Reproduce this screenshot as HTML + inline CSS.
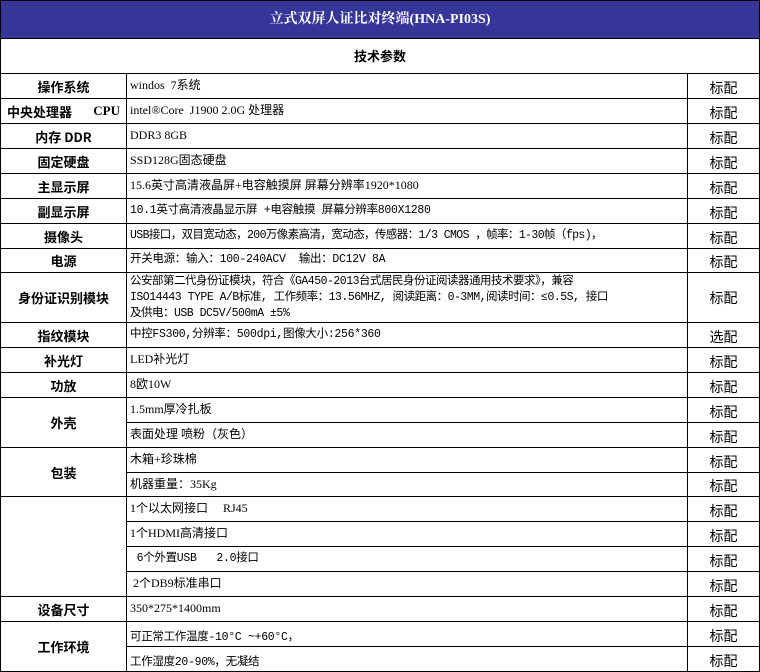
<!DOCTYPE html>
<html><head><meta charset="utf-8"><style>
*{margin:0;padding:0;box-sizing:border-box}
body{width:760px;height:672px;background:#fff;position:relative;overflow:hidden;font-family:"Liberation Serif","Noto Serif CJK SC","Noto Sans CJK SC",serif;color:#000}
.hd{position:absolute;left:0;top:0;width:760px;height:39px;background:#363699;border:1px solid #000;color:#fff;font-weight:bold;font-size:14px;text-align:center;line-height:38px}
.sub{position:absolute;left:0;top:38px;width:760px;height:36px;border:1px solid #000;border-top:none;font-weight:bold;font-size:13px;text-align:center;line-height:36px;font-family:"Noto Sans CJK SC",sans-serif}
.c{position:absolute;border-right:1px solid #000;border-bottom:1px solid #000}
.l{left:0;width:127px;border-left:1px solid #000;font-weight:bold;font-size:13px;font-family:"Noto Sans CJK SC",sans-serif;display:flex;align-items:center;justify-content:center}
.m{left:127px;width:561px;font-size:12px;padding:3px 0 0 3px;line-height:17px;font-family:"Liberation Serif","WenQuanYi Zen Hei",serif;white-space:nowrap;overflow:hidden}
.mo{font-family:"Liberation Mono","WenQuanYi Zen Hei",monospace;font-size:11.5px;letter-spacing:-0.3px}
.r{left:688px;width:72px;font-size:14px;text-align:center;font-family:"WenQuanYi Zen Hei",sans-serif;display:flex;align-items:flex-end;justify-content:center}
</style></head><body>
<div class="hd">立式双屏人证比对终端(HNA-PI03S)</div>
<div class="sub">技术参数</div>

<div class="c l" style="top:74px;height:25px">操作系统</div><div class="c m" style="top:74px;height:25px">windos&nbsp; 7系统</div><div class="c r" style="top:74px;height:25px">标配</div>
<div class="c l" style="top:99px;height:25px;justify-content:space-between;padding:0 6px">中央处理器<span style="font-family:'Liberation Serif',serif">CPU</span></div><div class="c m" style="top:99px;height:25px">intel®Core&nbsp; J1900 2.0G 处理器</div><div class="c r" style="top:99px;height:25px">标配</div>
<div class="c l" style="top:124px;height:25px">内存 DDR</div><div class="c m" style="top:124px;height:25px">DDR3 8GB</div><div class="c r" style="top:124px;height:25px">标配</div>
<div class="c l" style="top:149px;height:25px">固定硬盘</div><div class="c m" style="top:149px;height:25px">SSD128G固态硬盘</div><div class="c r" style="top:149px;height:25px">标配</div>
<div class="c l" style="top:174px;height:25px">主显示屏</div><div class="c m" style="top:174px;height:25px">15.6英寸高清液晶屏+电容触摸屏 屏幕分辨率1920*1080</div><div class="c r" style="top:174px;height:25px">标配</div>
<div class="c l" style="top:199px;height:25px">副显示屏</div><div class="c m mo" style="top:199px;height:25px">10.1英寸高清液晶显示屏 +电容触摸 屏幕分辨率800X1280</div><div class="c r" style="top:199px;height:25px">标配</div>
<div class="c l" style="top:224px;height:25px">摄像头</div><div class="c m mo" style="top:224px;height:25px;letter-spacing:-0.6px">USB接口，双目宽动态，200万像素高清，宽动态，传感器：1/3 CMOS ，帧率：1-30帧（fps)，</div><div class="c r" style="top:224px;height:25px">标配</div>
<div class="c l" style="top:249px;height:24px">电源</div><div class="c m mo" style="top:249px;height:24px;padding-top:2px">开关电源：输入：100-240ACV&nbsp; 输出：DC12V 8A</div><div class="c r" style="top:249px;height:24px">标配</div>
<div class="c l" style="top:273px;height:50px">身份证识别模块</div><div class="c m mo" style="top:273px;height:50px;padding-top:1px;line-height:16px;letter-spacing:-0.5px">公安部第二代身份证模块，符合《GA450-2013台式居民身份证阅读器通用技术要求》，兼容<br>ISO14443 TYPE A/B标准, 工作频率：13.56MHZ, 阅读距离：0-3MM,阅读时间：≤0.5S, 接口<br>及供电：USB DC5V/500mA ±5%</div><div class="c r" style="top:273px;height:50px;align-items:center">标配</div>
<div class="c l" style="top:323px;height:25px">指纹模块</div><div class="c m mo" style="top:323px;height:25px">中控FS300,分辨率：500dpi,图像大小:256*360</div><div class="c r" style="top:323px;height:25px">选配</div>
<div class="c l" style="top:348px;height:25px">补光灯</div><div class="c m" style="top:348px;height:25px">LED补光灯</div><div class="c r" style="top:348px;height:25px">标配</div>
<div class="c l" style="top:373px;height:25px">功放</div><div class="c m" style="top:373px;height:25px">8欧10W</div><div class="c r" style="top:373px;height:25px">标配</div>
<div class="c l" style="top:398px;height:50px">外壳</div><div class="c m" style="top:398px;height:25px">1.5mm厚冷扎板</div><div class="c r" style="top:398px;height:25px">标配</div>
<div class="c m" style="top:423px;height:25px">表面处理 喷粉（灰色）</div><div class="c r" style="top:423px;height:25px">标配</div>
<div class="c l" style="top:448px;height:49px">包装</div><div class="c m" style="top:448px;height:25px">木箱+珍珠棉</div><div class="c r" style="top:448px;height:25px">标配</div>
<div class="c m" style="top:473px;height:24px">机器重量：35Kg</div><div class="c r" style="top:473px;height:24px">标配</div>
<div class="c l" style="top:497px;height:100px"></div>
<div class="c m" style="top:497px;height:25px">1个以太网接口&nbsp;&nbsp;&nbsp;&nbsp; RJ45</div><div class="c r" style="top:497px;height:25px">标配</div>
<div class="c m" style="top:522px;height:25px">1个HDMI高清接口</div><div class="c r" style="top:522px;height:25px">标配</div>
<div class="c m mo" style="top:547px;height:25px">&nbsp;6个外置USB&nbsp;&nbsp; 2.0接口</div><div class="c r" style="top:547px;height:25px">标配</div>
<div class="c m" style="top:572px;height:25px">&nbsp;2个DB9标准串口</div><div class="c r" style="top:572px;height:25px">标配</div>
<div class="c l" style="top:597px;height:25px">设备尺寸</div><div class="c m" style="top:597px;height:25px">350*275*1400mm</div><div class="c r" style="top:597px;height:25px">标配</div>
<div class="c l" style="top:622px;height:50px">工作环境</div><div class="c m mo" style="top:622px;height:25px;padding-top:7px">可正常工作温度-10°C ~+60°C，</div><div class="c r" style="top:622px;height:25px">标配</div>
<div class="c m mo" style="top:647px;height:25px;padding-top:7px">工作湿度20-90%，无凝结</div><div class="c r" style="top:647px;height:25px">标配</div>
</body></html>
